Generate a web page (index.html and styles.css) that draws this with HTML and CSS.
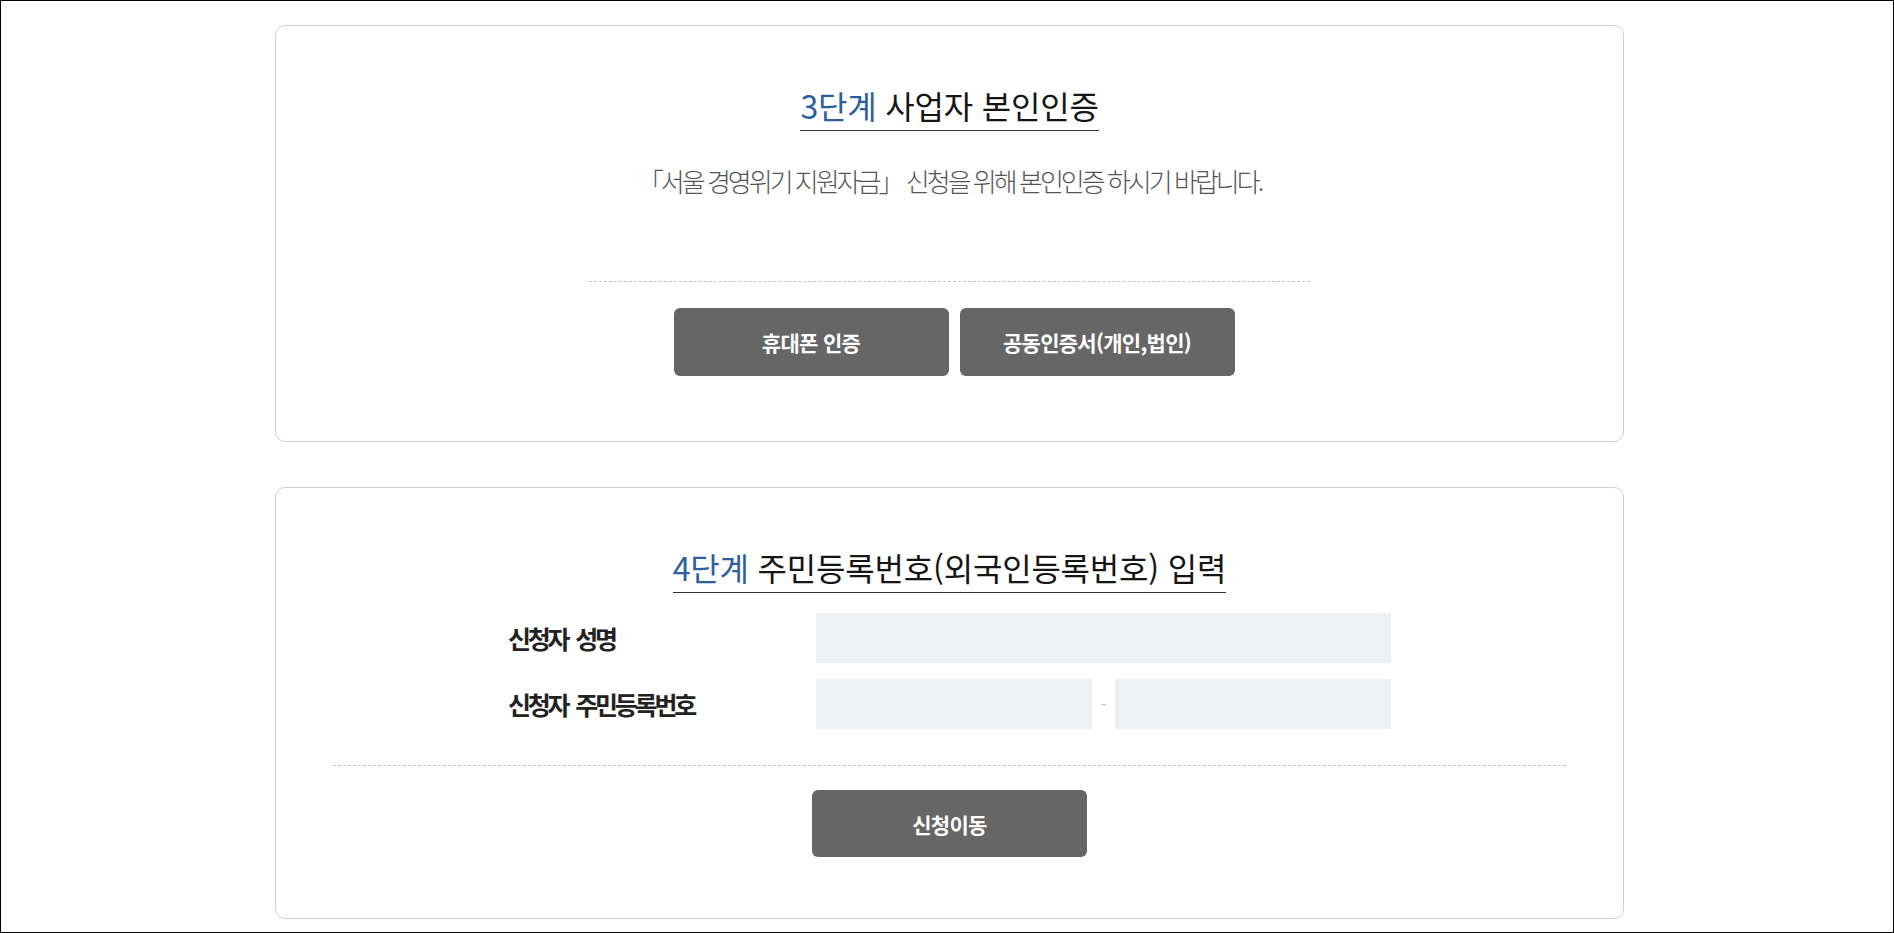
FILE: index.html
```html
<!DOCTYPE html>
<html lang="ko">
<head>
<meta charset="utf-8">
<title>본인인증</title>
<link rel="stylesheet" href="styles.css">
</head>
<body>
<div class="frame">
  <section class="card card-auth">
    <div class="title-wrap">
      <h2 class="step-title"><span class="step">3단계</span> 사업자 본인인증</h2>
    </div>
    <p class="desc">「서울 경영위기 지원자금」 신청을 위해 본인인증 하시기 바랍니다.</p>
    <div class="divider divider-short"></div>
    <div class="actions actions-auth">
      <button type="button" class="btn">휴대폰 인증</button>
      <button type="button" class="btn">공동인증서(개인,법인)</button>
    </div>
  </section>

  <section class="card card-id">
    <div class="title-wrap">
      <h2 class="step-title"><span class="step">4단계</span> 주민등록번호(외국인등록번호) 입력</h2>
    </div>
    <div class="form">
      <div class="row">
        <label class="label" for="name">신청자 성명</label>
        <input class="field field-full" id="name" type="text">
      </div>
      <div class="row">
        <label class="label" for="rrn1">신청자 주민등록번호</label>
        <div class="pair">
          <input class="field field-half" id="rrn1" type="text">
          <span class="dash">-</span>
          <input class="field field-half" id="rrn2" type="password">
        </div>
      </div>
    </div>
    <div class="divider divider-long"></div>
    <div class="actions actions-submit">
      <button type="button" class="btn btn-submit">신청이동</button>
    </div>
  </section>
</div>
</body>
</html>
```

FILE: styles.css
```css
* {
  box-sizing: border-box;
}

html, body {
  margin: 0;
  padding: 0;
  background: #fff;
}

body {
  font-family: "Noto Sans CJK KR", "Noto Sans", sans-serif;
  color: #222;
}

.frame {
  width: 1894px;
  height: 933px;
  border: 1px solid #000;
  padding: 24px 0 0 5px;
  overflow: hidden;
}

.card {
  width: 1349px;
  margin: 0 auto;
  border: 1px solid #cfcfcf;
  border-radius: 10px;
  background: #fff;
  padding: 61px 0 0;
}

.card-auth {
  padding-bottom: 65px;
}

.card-id {
  margin-top: 45px;
  padding-bottom: 61px;
}

.title-wrap {
  text-align: center;
}

.step-title {
  display: inline-block;
  margin: 0;
  padding: 0 0 7px;
  font-size: 32px;
  line-height: 36px;
  font-weight: 400;
  letter-spacing: -0.2px;
  color: #151515;
  border-bottom: 1px solid #333;
}

.step {
  color: #2d5e9e;
}

.desc {
  margin: 35px 0 0;
  text-align: center;
  font-size: 26px;
  line-height: 30px;
  font-weight: 300;
  letter-spacing: -3px;
  color: #555;
}

.divider {
  margin: 0 auto;
  border-top: 1px dashed #c4c4c4;
}

.divider-short {
  width: 721px;
  margin-top: 85px;
}

.divider-long {
  width: 1233px;
  margin-top: 36px;
}

.actions {
  display: flex;
  justify-content: center;
  gap: 11px;
  margin-top: 26px;
}

.actions-auth {
  padding-left: 9px;
}

.actions-submit {
  margin-top: 24px;
}

.btn {
  width: 275px;
  height: 68px;
  border: 0;
  border-radius: 6px;
  background: #666;
  color: #fff;
  font-family: "Noto Sans CJK KR", "Noto Sans", sans-serif;
  font-size: 21px;
  font-weight: 700;
  letter-spacing: -0.7px;
  padding: 0;
}

.btn-submit {
  height: 67px;
}

.form {
  width: 883px;
  margin: 20px auto 0;
  display: flex;
  flex-direction: column;
  gap: 16px;
}

.row {
  display: flex;
  align-items: center;
}

.label {
  width: 308px;
  font-size: 25px;
  line-height: 30px;
  font-weight: 700;
  letter-spacing: -3.2px;
  word-spacing: 4px;
  color: #222;
}

.field {
  height: 50px;
  border: 0;
  background: #eef1f2;
  padding: 0 12px;
  font-family: "Noto Sans CJK KR", "Noto Sans", sans-serif;
  font-size: 18px;
  outline: none;
}

.field-full {
  width: 575px;
}

.pair {
  width: 575px;
  display: flex;
  align-items: center;
}

.field-half {
  width: 276px;
}

.dash {
  width: 23px;
  text-align: center;
  font-size: 16px;
  color: #bbb;
}
```
